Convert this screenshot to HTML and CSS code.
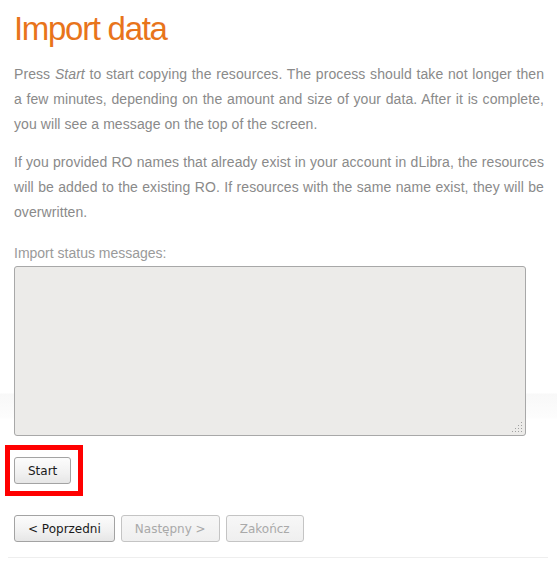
FILE: index.html
```html
<!DOCTYPE html>
<html>
<head>
<meta charset="utf-8">
<title>Import data</title>
<link rel="stylesheet" href="styles.css">
</head>
<body>
<div class="page">
  <div class="content">
    <h1 class="title">Import data</h1>
    <p class="text">Press <em>Start</em> to start copying the resources. The process should take not longer then a few minutes, depending on the amount and size of your data. After it is complete, you will see a message on the top of the screen.</p>
    <p class="text">If you provided RO names that already exist in your account in dLibra, the resources will be added to the existing RO. If resources with the same name exist, they will be overwritten.</p>
    <label class="label" for="status">Import status messages:</label>
    <div class="area-wrap">
      <textarea id="status" class="status" readonly></textarea>
      <svg class="grip" width="11" height="11" viewBox="0 0 11 11">
        <rect x="9" y="0" width="1" height="1"/>
        <rect x="6" y="3" width="1" height="1"/><rect x="9" y="3" width="1" height="1"/>
        <rect x="3" y="6" width="1" height="1"/><rect x="6" y="6" width="1" height="1"/><rect x="9" y="6" width="1" height="1"/>
        <rect x="0" y="9" width="1" height="1"/><rect x="3" y="9" width="1" height="1"/><rect x="6" y="9" width="1" height="1"/><rect x="9" y="9" width="1" height="1"/>
      </svg>
    </div>
    <div class="start-row">
      <span class="highlight"></span>
      <button class="btn" type="button">Start</button>
    </div>
    <div class="nav">
      <button class="btn" type="button">&lt; Poprzedni</button>
      <button class="btn" type="button" disabled>Następny &gt;</button>
      <button class="btn" type="button" disabled>Zakończ</button>
    </div>
  </div>
  <div class="rule"></div>
</div>
</body>
</html>
```

FILE: styles.css
```css
html, body {
  background: #ffffff;
}
body {
  margin: 0;
  padding: 8px;
  font-family: "Liberation Sans", Arial, sans-serif;
  background: linear-gradient(to bottom,
    #ffffff 0, #ffffff 393px,
    #f8f8f8 394px, #fdfdfd 418px,
    #ffffff 419px, #ffffff 100%);
  min-height: 570px;
  box-sizing: border-box;
}
.page {
  width: 540px;
}
.content {
  padding: 1px 4px 0 6px;
}
.title {
  margin: 0 0 13px 0;
  font-family: "Liberation Sans", Arial, sans-serif;
  font-weight: normal;
  font-size: 33px;
  line-height: 40px;
  letter-spacing: -1.3px;
  color: #e8741b;
}
.text {
  margin: 0 0 13px 0;
  font-size: 14px;
  line-height: 25px;
  letter-spacing: 0.08px;
  color: #8a8a8a;
  text-align: justify;
}
.text em {
  font-style: italic;
}
.label {
  display: block;
  margin-top: 18px;
  font-size: 14px;
  line-height: 20px;
  color: #9a9a9a;
}
.area-wrap {
  position: relative;
  width: 512px;
  height: 170px;
  margin-top: 3px;
}
.status {
  display: block;
  box-sizing: border-box;
  width: 512px;
  height: 170px;
  margin: 0;
  padding: 4px;
  border: 1px solid #a8a8a8;
  border-radius: 3px;
  background: #ecebe9;
  resize: none;
  outline: none;
}
.grip {
  position: absolute;
  right: 3px;
  bottom: 3px;
  fill: #a0a0a0;
}
.start-row {
  position: relative;
  margin-top: 21px;
  display: flex;
}
.highlight {
  position: absolute;
  left: -9px;
  top: -12px;
  width: 68px;
  height: 41px;
  border: 5px solid #ff0000;
}
.btn {
  position: relative;
  box-sizing: border-box;
  height: 27px;
  margin: 0;
  padding: 0 13px;
  font-family: "DejaVu Sans", sans-serif;
  font-size: 12px;
  color: #1a1a1a;
  border: 1px solid #a3a3a3;
  border-radius: 3px;
  background: linear-gradient(to bottom, #fcfcfc 0%, #f1f1f1 60%, #e6e6e6 100%);
}
.btn:disabled {
  color: #a9a9a9;
  border-color: #c4c4c4;
  background: linear-gradient(to bottom, #f7f7f7 0%, #efefef 100%);
}
.nav {
  display: flex;
  gap: 6px;
  margin-top: 31px;
}
.rule {
  margin-top: 15px;
  height: 1px;
  background: #eeeeee;
}
```
